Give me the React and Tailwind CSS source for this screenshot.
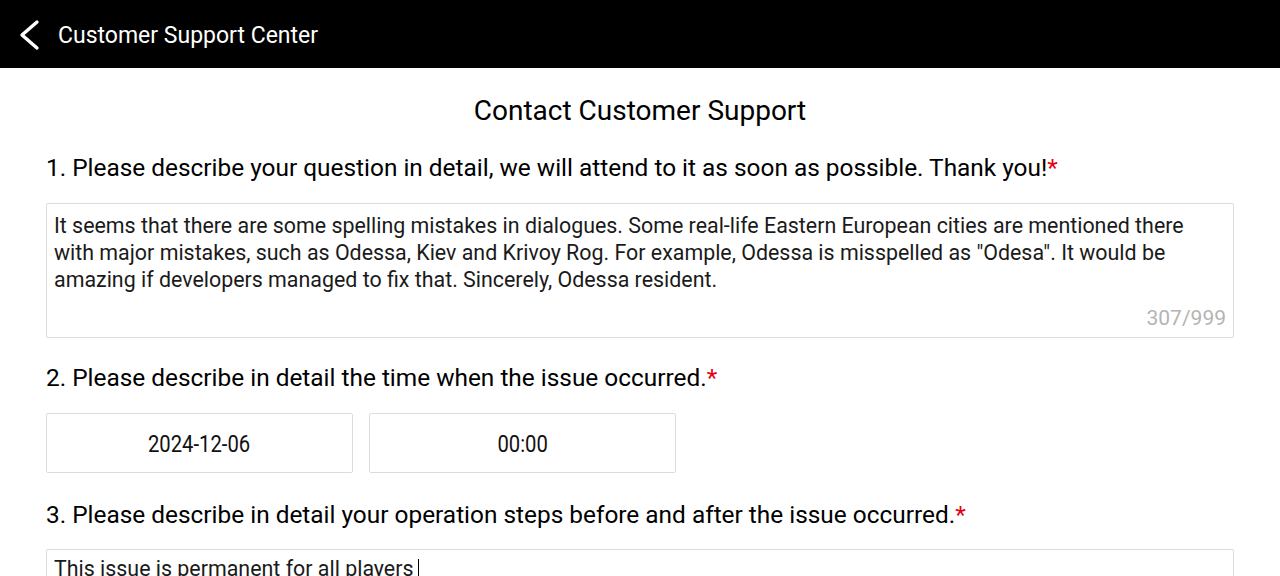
export default function App() {
  return (
    <div className="w-[1280px] h-[576px] overflow-hidden bg-white" style={{ fontFamily: "Roboto, 'Noto Sans', sans-serif" }}>
      <div className="h-[68px] bg-black flex items-center">
        <svg width="40" height="40" viewBox="0 0 40 40" className="ml-[10px] mt-[2px]">
          <path d="M27 7 L12 20 L27 33" fill="none" stroke="white" strokeWidth="3.4" strokeLinecap="round" strokeLinejoin="round" />
        </svg>
        <span className="ml-[8px] mt-[3px] text-white text-[23px] leading-none">Customer Support Center</span>
      </div>
      <div className="px-[46px]">
        <div className="text-center text-[28px] leading-none text-black mt-[29px]">Contact Customer Support</div>
        <div className="mt-[31px] text-[24.4px] leading-none text-black">
          1. Please describe your question in detail, we will attend to it as soon as possible. Thank you!<span className="text-[#e60012]">*</span>
        </div>
        <div className="mt-[23px] h-[135px] border border-[#dcdcdc] rounded-[2px] px-[7px] pt-[8px] pb-[8px] flex flex-col justify-between">
          <div className="text-[21.4px] leading-[27px] text-[#1a1a1a]">
            It seems that there are some spelling mistakes in dialogues. Some real-life Eastern European cities are mentioned there with major mistakes, such as Odessa, Kiev and Krivoy Rog. For example, Odessa is misspelled as "Odesa". It would be amazing if developers managed to fix that. Sincerely, Odessa resident.
          </div>
          <div className="text-right text-[21px] leading-none text-[#b4b4b4]">307/999</div>
        </div>
        <div className="mt-[28px] text-[24.4px] leading-none text-black">
          2. Please describe in detail the time when the issue occurred.<span className="text-[#e60012]">*</span>
        </div>
        <div className="mt-[22px] flex gap-[16px]">
          <div className="w-[307px] h-[60px] border border-[#dcdcdc] rounded-[2px] flex items-center justify-center pt-[3px] text-[#111]">
            <span className="inline-block text-[23px] leading-none scale-x-[0.88]">2024-12-06</span>
          </div>
          <div className="w-[307px] h-[60px] border border-[#dcdcdc] rounded-[2px] flex items-center justify-center pt-[3px] text-[#111]">
            <span className="inline-block text-[23px] leading-none scale-x-[0.88]">00:00</span>
          </div>
        </div>
        <div className="mt-[30px] text-[24.4px] leading-none text-black">
          3. Please describe in detail your operation steps before and after the issue occurred.<span className="text-[#e60012]">*</span>
        </div>
        <div className="mt-[22px] h-[135px] border border-[#dcdcdc] rounded-[2px] px-[7px] pt-[5px]">
          <div className="text-[21.4px] leading-[27px] text-[#1a1a1a]">
            This issue is permanent for all players<span className="inline-block w-[1px] h-[24px] bg-black align-middle ml-[5px]"></span>
          </div>
        </div>
      </div>
    </div>
  );
}
